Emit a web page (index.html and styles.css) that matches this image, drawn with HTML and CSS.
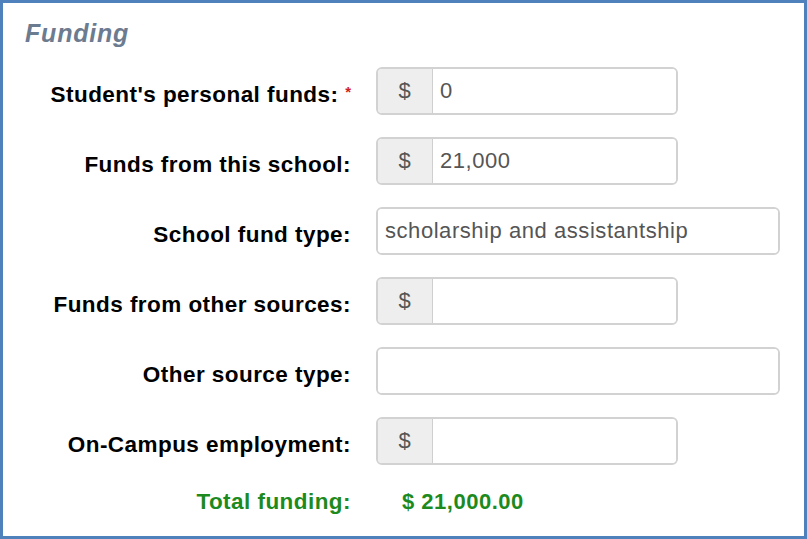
FILE: index.html
```html
<!DOCTYPE html>
<html>
<head>
<meta charset="utf-8">
<link rel="stylesheet" href="styles.css">
</head>
<body>
<div class="frame">
  <h2 class="title">Funding</h2>
  <div class="form">
    <div class="label">Student's personal funds: <span class="req">*</span></div>
    <div class="group narrow"><span class="addon">$</span><span class="field">0</span></div>

    <div class="label">Funds from this school:</div>
    <div class="group narrow"><span class="addon">$</span><span class="field">21,000</span></div>

    <div class="label">School fund type:</div>
    <div class="group wide"><span class="field">scholarship and assistantship</span></div>

    <div class="label">Funds from other sources:</div>
    <div class="group narrow"><span class="addon">$</span><span class="field"></span></div>

    <div class="label">Other source type:</div>
    <div class="group wide"><span class="field"></span></div>

    <div class="label">On-Campus employment:</div>
    <div class="group narrow"><span class="addon">$</span><span class="field"></span></div>

    <div class="label total">Total funding:</div>
    <div class="total-value">$ 21,000.00</div>
  </div>
</div>
</body>
</html>
```
FILE: styles.css
```css
html, body {
  margin: 0;
  padding: 0;
  background: #fff;
}
.frame {
  width: 807px;
  height: 539px;
  box-sizing: border-box;
  border: 3px solid #4f81bd;
  padding: 15px 0 0 22px;
  font-family: "Liberation Sans", Arial, sans-serif;
}
.title {
  margin: 0;
  font-size: 25px;
  line-height: 30px;
  font-style: italic;
  font-weight: bold;
  color: #6b7b90;
  letter-spacing: 0.8px;
}
.form {
  display: grid;
  grid-template-columns: 348px 404px;
  column-gap: 25px;
  row-gap: 22px;
  margin-top: 19px;
  margin-left: -22px;
}
.label {
  display: flex;
  align-items: center;
  justify-content: flex-end;
  box-sizing: border-box;
  padding-top: 8px;
  font-size: 22.5px;
  font-weight: bold;
  letter-spacing: 0.45px;
  color: #000;
  height: 48px;
  white-space: pre;
}
.req {
  color: #d0201f;
  font-size: 15px;
  letter-spacing: 0;
  align-self: flex-start;
  margin-top: 8px;
}
.group {
  display: flex;
  height: 48px;
  box-sizing: border-box;
  border: 2px solid #d2d2d2;
  border-radius: 6px;
  overflow: hidden;
  font-size: 22px;
  letter-spacing: 0.55px;
  color: #555;
}
.narrow { width: 302px; }
.wide { width: 404px; }
.addon {
  width: 54px;
  flex: none;
  background: #eee;
  border-right: 1px solid #cfcfcf;
  display: flex;
  align-items: center;
  justify-content: center;
}
.field {
  flex: 1;
  display: flex;
  align-items: center;
  padding-left: 7px;
  background: #fff;
}
.total, .total-value {
  height: 30px;
  padding-top: 0;
  color: #1d8a20;
  font-weight: bold;
}
.total-value {
  display: flex;
  align-items: center;
  font-size: 22px;
  letter-spacing: 0.5px;
  padding-left: 26px;
}
```
